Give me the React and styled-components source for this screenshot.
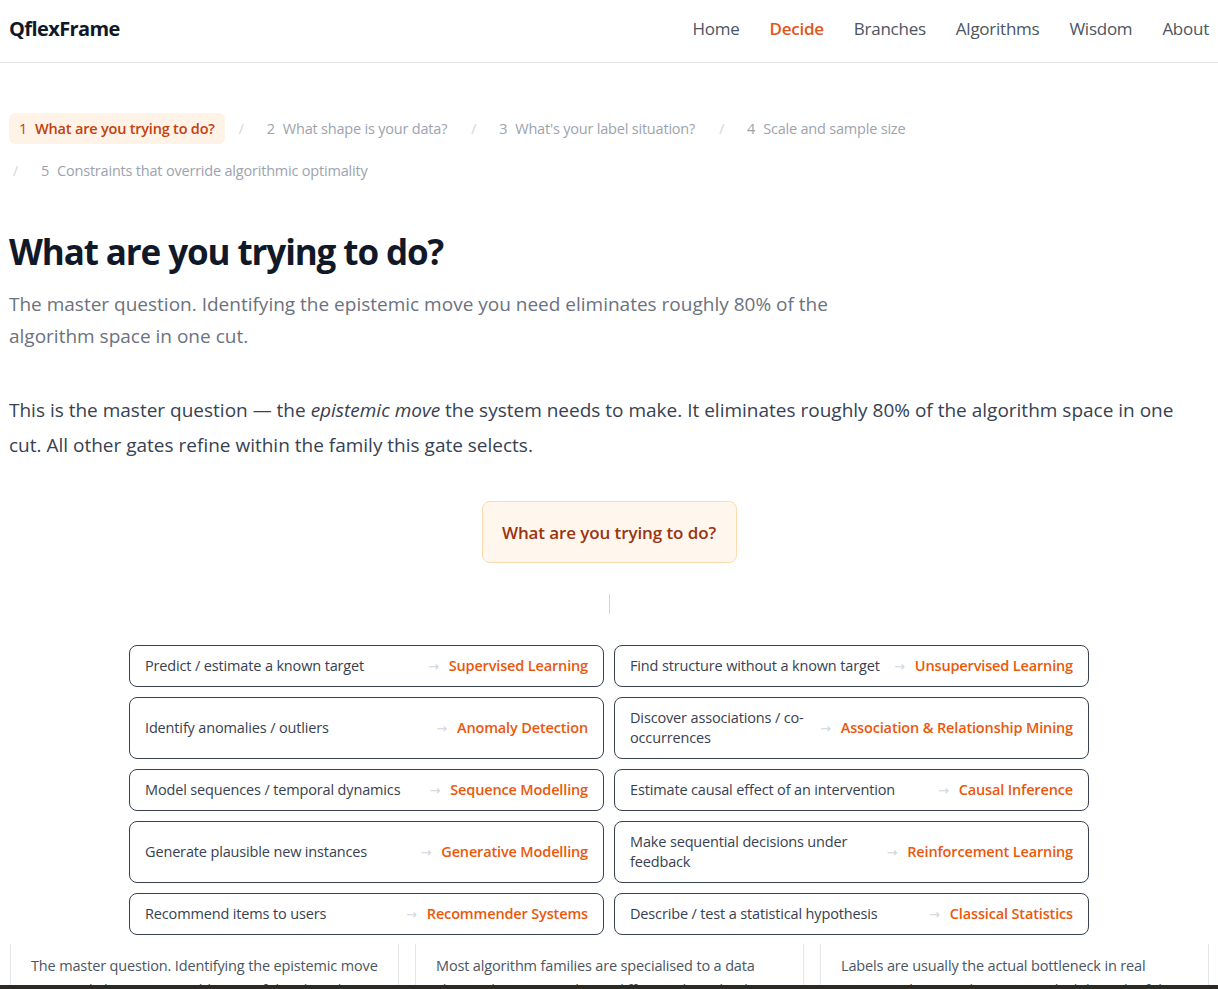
import React from "react";
import styled, { createGlobalStyle } from "styled-components";

const GlobalStyle = createGlobalStyle`
  * { box-sizing: border-box; }
  html, body { margin: 0; padding: 0; background: #ffffff; }
  body {
    font-family: "Open Sans", "Noto Sans", "DejaVu Sans", sans-serif;
    color: #1f2937;
    -webkit-font-smoothing: antialiased;
  }
`;

const Header = styled.header`
  height: 63px;
  border-bottom: 1px solid #e5e7eb;
  display: flex;
  align-items: center;
  justify-content: space-between;
  padding: 0 9px;
`;

const Logo = styled.div`
  font-size: 20px;
  font-weight: 700;
  color: #111827;
  letter-spacing: -0.6px;
  margin-top: -6px;
`;

const Nav = styled.nav`
  display: flex;
  gap: 30px;
  margin-top: -6px;
`;

const NavLink = styled.a`
  font-size: 17px;
  letter-spacing: -0.25px;
  color: ${(p) => (p.$active ? "#e0571a" : "#4b5563")};
  font-weight: ${(p) => (p.$active ? 600 : 400)};
  text-decoration: none;
`;

const Main = styled.main`
  padding: 50px 9px 0;
`;

const Steps = styled.div`
  display: flex;
  flex-wrap: wrap;
  align-items: center;
  column-gap: 10px;
  row-gap: 11px;
  font-size: 14.5px;
  letter-spacing: -0.2px;
`;

/* a separator travels with the step after it, so a wrapped row starts with "/" */
const StepGroup = styled.div`
  display: flex;
  align-items: center;
  gap: 10px;
`;

const Step = styled.div`
  display: flex;
  align-items: center;
  gap: 8px;
  height: 31px;
  padding: 0 10px;
  border-radius: 6px;
  background: ${(p) => (p.$active ? "#fff3e8" : "transparent")};
  color: ${(p) => (p.$active ? "#c2410c" : "#9ca3af")};
`;

const StepNum = styled.span`
  font-weight: 400;
`;

const StepLabel = styled.span`
  font-weight: ${(p) => (p.$active ? 600 : 400)};
`;

const Sep = styled.span`
  color: #d1d5db;
  font-size: 14px;
  padding: 0 3px 0 4px;
`;

const Title = styled.h1`
  margin: 44px 0 0;
  font-size: 35px;
  line-height: 43px;
  font-weight: 700;
  color: #111827;
  letter-spacing: -1.1px;
`;

const Lead = styled.p`
  margin: 15px 0 0;
  max-width: 840px;
  font-size: 19px;
  line-height: 32px;
  color: #6b7280;
`;

const Body = styled.p`
  margin: 41px 0 0;
  font-size: 19px;
  line-height: 35px;
  color: #374151;
  max-width: 1200px;
`;

const Center = styled.div`
  display: flex;
  flex-direction: column;
  align-items: center;
  margin-top: 38px;
`;

const QuestionBox = styled.div`
  width: 255px;
  height: 62px;
  display: flex;
  align-items: center;
  justify-content: center;
  background: #fff7ed;
  border: 1px solid #fcd9ae;
  border-radius: 8px;
  font-size: 17px;
  font-weight: 600;
  color: #9a3412;
  letter-spacing: -0.1px;
`;

const Stem = styled.div`
  width: 1px;
  height: 20px;
  margin-top: 31px;
  background: #d1d5db;
`;

const Grid = styled.div`
  width: 960px;
  margin: 31px auto 0;
  display: grid;
  grid-template-columns: 1fr 1fr;
  gap: 10px 10px;
`;

const Branch = styled.div`
  display: flex;
  align-items: center;
  gap: 12px;
  padding: 10px 15px;
  border: 1px solid #374151;
  border-radius: 8px;
  font-size: 14.5px;
  line-height: 20px;
  letter-spacing: -0.15px;
`;

const Move = styled.span`
  flex: 1;
  min-width: 0;
  color: #374151;
`;

const Outcome = styled.span`
  flex-shrink: 0;
  display: flex;
  align-items: center;
  gap: 10px;
`;

const Arrow = styled.span`
  color: #d1d5db;
  font-size: 13px;
`;

const Family = styled.span`
  color: #ea580c;
  font-weight: 600;
`;

const Notes = styled.div`
  display: grid;
  grid-template-columns: repeat(3, 1fr);
  gap: 16px;
  padding: 9px 9px 0 10px;
`;

const Note = styled.div`
  border-left: 1px solid #e5e7eb;
  border-right: 1px solid #e5e7eb;
  padding: 10px 20px 0;
  height: 60px;
  font-size: 14.5px;
  line-height: 24px;
  color: #4b5563;
  letter-spacing: -0.15px;
`;

const BottomEdge = styled.div`
  position: fixed;
  left: 0;
  right: 0;
  bottom: 0;
  height: 4px;
  background: #2b2b22;
`;

const navItems = ["Home", "Decide", "Branches", "Algorithms", "Wisdom", "About"];

const steps = [
  "What are you trying to do?",
  "What shape is your data?",
  "What's your label situation?",
  "Scale and sample size",
  "Constraints that override algorithmic optimality",
];

const branches = [
  ["Predict / estimate a known target", "Supervised Learning"],
  ["Find structure without a known target", "Unsupervised Learning"],
  ["Identify anomalies / outliers", "Anomaly Detection"],
  ["Discover associations / co-occurrences", "Association & Relationship Mining"],
  ["Model sequences / temporal dynamics", "Sequence Modelling"],
  ["Estimate causal effect of an intervention", "Causal Inference"],
  ["Generate plausible new instances", "Generative Modelling"],
  ["Make sequential decisions under feedback", "Reinforcement Learning"],
  ["Recommend items to users", "Recommender Systems"],
  ["Describe / test a statistical hypothesis", "Classical Statistics"],
];

const notes = [
  "The master question. Identifying the epistemic move you need eliminates roughly 80% of the algorithm space in one cut.",
  "Most algorithm families are specialised to a data shape. The same goal on a different shape leads to a different family.",
  "Labels are usually the actual bottleneck in real projects. This gate determines which branch of the family applies.",
];

export default function App() {
  return (
    <>
      <GlobalStyle />
      <Header>
        <Logo>QflexFrame</Logo>
        <Nav>
          {navItems.map((n) => (
            <NavLink key={n} href="#" $active={n === "Decide"}>
              {n}
            </NavLink>
          ))}
        </Nav>
      </Header>
      <Main>
        <Steps>
          {steps.map((s, i) => (
            <StepGroup key={s}>
              {i > 0 && <Sep>/</Sep>}
              <Step $active={i === 0}>
                <StepNum>{i + 1}</StepNum>
                <StepLabel $active={i === 0}>{s}</StepLabel>
              </Step>
            </StepGroup>
          ))}
        </Steps>
        <Title>What are you trying to do?</Title>
        <Lead>
          The master question. Identifying the epistemic move you need eliminates roughly 80% of the
          algorithm space in one cut.
        </Lead>
        <Body>
          This is the master question — the <em>epistemic move</em> the system needs to make. It
          eliminates roughly 80% of the algorithm space in one cut. All other gates refine within the
          family this gate selects.
        </Body>
        <Center>
          <QuestionBox>What are you trying to do?</QuestionBox>
          <Stem />
        </Center>
        <Grid>
          {branches.map(([move, family]) => (
            <Branch key={family}>
              <Move>{move}</Move>
              <Outcome>
                <Arrow>→</Arrow>
                <Family>{family}</Family>
              </Outcome>
            </Branch>
          ))}
        </Grid>
      </Main>
      <Notes>
        {notes.map((n) => (
          <Note key={n}>{n}</Note>
        ))}
      </Notes>
      <BottomEdge />
    </>
  );
}
